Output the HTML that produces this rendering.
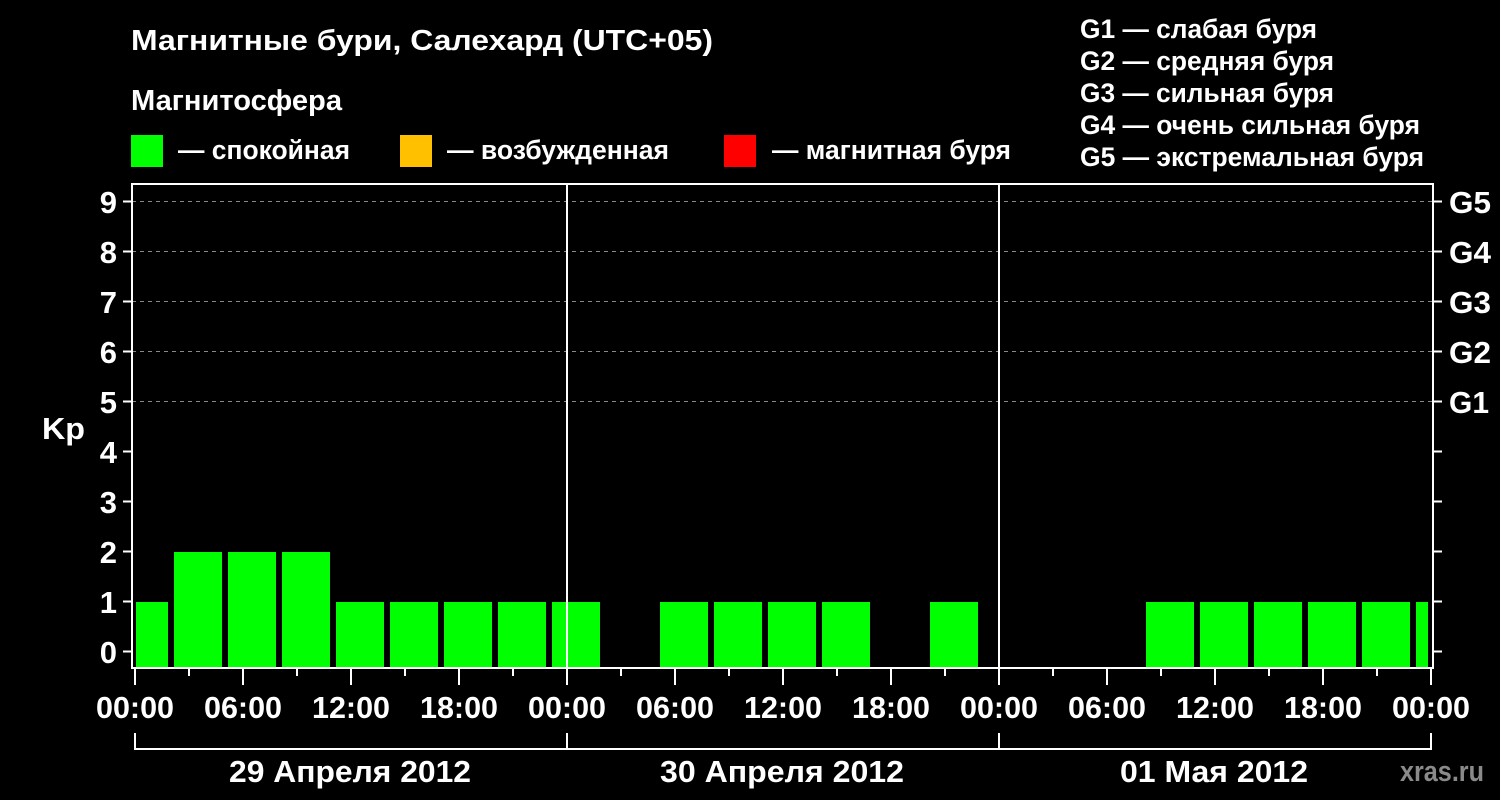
<!DOCTYPE html>
<html><head><meta charset="utf-8"><style>
html,body{margin:0;padding:0;background:#000;width:1500px;height:800px;overflow:hidden}
text{font-family:"Liberation Sans",sans-serif;font-weight:bold;fill:#fff}
</style></head><body>
<svg width="1500" height="800" xmlns="http://www.w3.org/2000/svg">
<rect width="1500" height="800" fill="#000"/>
<text x="131" y="50" font-size="29" textLength="582" lengthAdjust="spacingAndGlyphs">Магнитные бури, Салехард (UTC+05)</text>
<text x="131" y="110" font-size="29" textLength="211" lengthAdjust="spacingAndGlyphs">Магнитосфера</text>
<rect x="131" y="135" width="32" height="32" fill="#00ff00"/>
<rect x="400" y="135" width="32" height="32" fill="#ffc000"/>
<rect x="724" y="135" width="32" height="32" fill="#ff0000"/>
<text x="178" y="159" font-size="27" textLength="172" lengthAdjust="spacingAndGlyphs">— спокойная</text>
<text x="447" y="159" font-size="27" textLength="222" lengthAdjust="spacingAndGlyphs">— возбужденная</text>
<text x="772" y="159" font-size="27" textLength="239" lengthAdjust="spacingAndGlyphs">— магнитная буря</text>
<g font-size="27">
<text x="1080" y="38" textLength="237" lengthAdjust="spacingAndGlyphs">G1 — слабая буря</text>
<text x="1080" y="70" textLength="254" lengthAdjust="spacingAndGlyphs">G2 — средняя буря</text>
<text x="1080" y="102" textLength="254" lengthAdjust="spacingAndGlyphs">G3 — сильная буря</text>
<text x="1080" y="134" textLength="340" lengthAdjust="spacingAndGlyphs">G4 — очень сильная буря</text>
<text x="1080" y="166" textLength="344" lengthAdjust="spacingAndGlyphs">G5 — экстремальная буря</text>
</g>
<g stroke="#888" stroke-dasharray="4,4" stroke-width="1">
<line x1="132" x2="1433" y1="201.5" y2="201.5"/>
<line x1="132" x2="1433" y1="251.5" y2="251.5"/>
<line x1="132" x2="1433" y1="301.5" y2="301.5"/>
<line x1="132" x2="1433" y1="351.5" y2="351.5"/>
<line x1="132" x2="1433" y1="401.5" y2="401.5"/>
</g>
<g fill="#00ff00">
<rect x="136" y="602" width="32" height="66"/>
<rect x="174" y="552" width="48" height="116"/>
<rect x="228" y="552" width="48" height="116"/>
<rect x="282" y="552" width="48" height="116"/>
<rect x="336" y="602" width="48" height="66"/>
<rect x="390" y="602" width="48" height="66"/>
<rect x="444" y="602" width="48" height="66"/>
<rect x="498" y="602" width="48" height="66"/>
<rect x="552" y="602" width="48" height="66"/>
<rect x="660" y="602" width="48" height="66"/>
<rect x="714" y="602" width="48" height="66"/>
<rect x="768" y="602" width="48" height="66"/>
<rect x="822" y="602" width="48" height="66"/>
<rect x="930" y="602" width="48" height="66"/>
<rect x="1146" y="602" width="48" height="66"/>
<rect x="1200" y="602" width="48" height="66"/>
<rect x="1254" y="602" width="48" height="66"/>
<rect x="1308" y="602" width="48" height="66"/>
<rect x="1362" y="602" width="48" height="66"/>
<rect x="1416" y="602" width="12" height="66"/>
</g>
<g stroke="#fff" stroke-width="2" fill="none">
<rect x="132" y="184" width="1301" height="484"/>
<line x1="567" y1="184" x2="567" y2="668"/>
<line x1="999" y1="184" x2="999" y2="668"/>
<path d="M135 733V749H1431V733M567 733V749M999 733V749"/>
</g>
<g stroke="#fff" stroke-width="2">
<path d="M123 201.5H131M123 251.5H131M123 301.5H131M123 351.5H131M123 401.5H131M123 451.5H131M123 501.5H131M123 551.5H131M123 601.5H131M123 651.5H131"/>
<path d="M1434 201.5H1442M1434 251.5H1442M1434 301.5H1442M1434 351.5H1442M1434 401.5H1442M1434 451.5H1442M1434 501.5H1442M1434 551.5H1442M1434 601.5H1442M1434 651.5H1442"/>
<path d="M135 669V685M189 669V676M243 669V685M297 669V676M351 669V685M405 669V676M459 669V685M513 669V676M567 669V685M621 669V676M675 669V685M729 669V676M783 669V685M837 669V676M891 669V685M945 669V676M999 669V685M1053 669V676M1107 669V685M1161 669V676M1215 669V685M1269 669V676M1323 669V685M1377 669V676M1431 669V685"/>
</g>
<g font-size="31" text-anchor="end">
<text x="117" y="213">9</text><text x="117" y="263">8</text><text x="117" y="313">7</text>
<text x="117" y="363">6</text><text x="117" y="413">5</text><text x="117" y="463">4</text>
<text x="117" y="513">3</text><text x="117" y="563">2</text><text x="117" y="613">1</text>
<text x="117" y="663">0</text>
</g>
<text x="42" y="439" font-size="31" textLength="43" lengthAdjust="spacingAndGlyphs">Kp</text>
<g font-size="31">
<text x="1449" y="213" textLength="42" lengthAdjust="spacingAndGlyphs">G5</text><text x="1449" y="263" textLength="42" lengthAdjust="spacingAndGlyphs">G4</text><text x="1449" y="313" textLength="42" lengthAdjust="spacingAndGlyphs">G3</text>
<text x="1449" y="363" textLength="42" lengthAdjust="spacingAndGlyphs">G2</text><text x="1449" y="413" textLength="40" lengthAdjust="spacingAndGlyphs">G1</text>
</g>
<g font-size="31" text-anchor="middle">
<text x="135" y="718" textLength="78" lengthAdjust="spacingAndGlyphs">00:00</text>
<text x="243" y="718" textLength="78" lengthAdjust="spacingAndGlyphs">06:00</text>
<text x="351" y="718" textLength="78" lengthAdjust="spacingAndGlyphs">12:00</text>
<text x="459" y="718" textLength="78" lengthAdjust="spacingAndGlyphs">18:00</text>
<text x="567" y="718" textLength="78" lengthAdjust="spacingAndGlyphs">00:00</text>
<text x="675" y="718" textLength="78" lengthAdjust="spacingAndGlyphs">06:00</text>
<text x="783" y="718" textLength="78" lengthAdjust="spacingAndGlyphs">12:00</text>
<text x="891" y="718" textLength="78" lengthAdjust="spacingAndGlyphs">18:00</text>
<text x="999" y="718" textLength="78" lengthAdjust="spacingAndGlyphs">00:00</text>
<text x="1107" y="718" textLength="78" lengthAdjust="spacingAndGlyphs">06:00</text>
<text x="1215" y="718" textLength="78" lengthAdjust="spacingAndGlyphs">12:00</text>
<text x="1323" y="718" textLength="78" lengthAdjust="spacingAndGlyphs">18:00</text>
<text x="1431" y="718" textLength="78" lengthAdjust="spacingAndGlyphs">00:00</text>
<text x="350" y="782" textLength="242" lengthAdjust="spacingAndGlyphs">29 Апреля 2012</text>
<text x="782" y="782" textLength="244" lengthAdjust="spacingAndGlyphs">30 Апреля 2012</text>
<text x="1214" y="782" textLength="188" lengthAdjust="spacingAndGlyphs">01 Мая 2012</text>
</g>
<text x="1400" y="781" font-size="29" style="fill:#8a8a8a" textLength="84" lengthAdjust="spacingAndGlyphs">xras.ru</text>
</svg>
</body></html>
